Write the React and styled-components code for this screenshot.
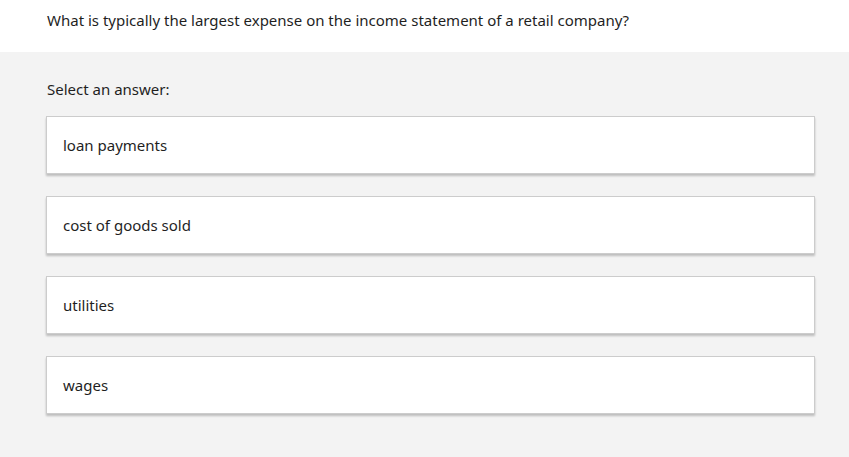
import React from "react";
import styled, { createGlobalStyle } from "styled-components";

const Global = createGlobalStyle`
  html, body { margin: 0; padding: 0; background: #f3f3f3; }
  body { font-family: "Segoe UI", "Noto Sans", "Open Sans", sans-serif; color: #1f1f1f; }
`;

const Page = styled.div`
  width: 849px;
  min-height: 457px;
  background: #f3f3f3;
`;

const Header = styled.div`
  background: #ffffff;
  height: 52px;
  box-sizing: border-box;
  padding: 9px 46px 0 47px;
  font-size: 15px;
  line-height: 22px;
`;

const Body = styled.div`
  padding: 27px 34px 0 46px;
  display: flex;
  flex-direction: column;
`;

const Prompt = styled.div`
  font-size: 15px;
  line-height: 20px;
  margin-bottom: 17px;
  padding-left: 1px;
`;

const Options = styled.div`
  display: flex;
  flex-direction: column;
  gap: 22px;
`;

const Option = styled.button`
  all: unset;
  box-sizing: border-box;
  width: 769px;
  height: 58px;
  background: #ffffff;
  border: 1px solid #cccccc;
  box-shadow: 0 1.5px 2px rgba(0, 0, 0, 0.22);
  padding: 0 16px 1px;
  display: flex;
  align-items: center;
  font-family: "Segoe UI", "Noto Sans", "Open Sans", sans-serif;
  font-size: 15px;
  color: #1f1f1f;
  cursor: pointer;
`;

const answers = ["loan payments", "cost of goods sold", "utilities", "wages"];

export default function App() {
  return (
    <Page>
      <Global />
      <Header>
        What is typically the largest expense on the income statement of a retail company?
      </Header>
      <Body>
        <Prompt>Select an answer:</Prompt>
        <Options>
          {answers.map((a) => (
            <Option key={a}>{a}</Option>
          ))}
        </Options>
      </Body>
    </Page>
  );
}
